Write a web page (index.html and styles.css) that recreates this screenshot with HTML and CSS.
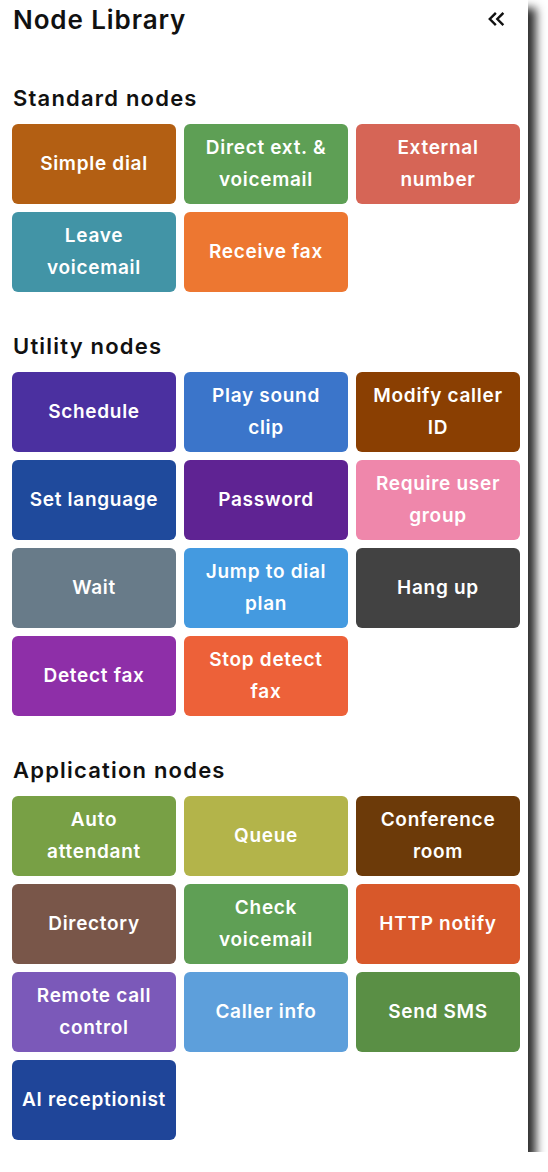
FILE: index.html
```html
<!DOCTYPE html>
<html lang="en">
<head>
<meta charset="utf-8">
<title>Node Library</title>
<link rel="stylesheet" href="styles.css">
</head>
<body>
<aside class="panel">
  <header class="panel-header">
    <h1 class="panel-title">Node Library</h1>
    <button class="collapse-btn" aria-label="Collapse">
      <svg width="18" height="14" viewBox="0 0 18 14" fill="none" stroke="#111" stroke-width="2.4" stroke-linecap="square" stroke-linejoin="miter">
        <path d="M8 1.8 L2.8 7 L8 12.2"/>
        <path d="M15.5 1.8 L10.3 7 L15.5 12.2"/>
      </svg>
    </button>
  </header>

  <section class="section">
    <h2 class="section-title">Standard nodes</h2>
    <div class="grid">
      <div class="node c-simple">Simple dial</div>
      <div class="node c-direct">Direct ext. &amp; voicemail</div>
      <div class="node c-external">External number</div>
      <div class="node c-leave">Leave voicemail</div>
      <div class="node c-fax">Receive fax</div>
    </div>
  </section>

  <section class="section">
    <h2 class="section-title">Utility nodes</h2>
    <div class="grid">
      <div class="node c-schedule">Schedule</div>
      <div class="node c-play">Play sound clip</div>
      <div class="node c-modify">Modify caller ID</div>
      <div class="node c-lang">Set language</div>
      <div class="node c-password">Password</div>
      <div class="node c-require">Require user group</div>
      <div class="node c-wait">Wait</div>
      <div class="node c-jump">Jump to dial plan</div>
      <div class="node c-hangup">Hang up</div>
      <div class="node c-detect">Detect fax</div>
      <div class="node c-stop">Stop detect fax</div>
    </div>
  </section>

  <section class="section">
    <h2 class="section-title">Application nodes</h2>
    <div class="grid">
      <div class="node c-auto">Auto attendant</div>
      <div class="node c-queue">Queue</div>
      <div class="node c-conf">Conference room</div>
      <div class="node c-dir">Directory</div>
      <div class="node c-check">Check voicemail</div>
      <div class="node c-http">HTTP notify</div>
      <div class="node c-remote">Remote call control</div>
      <div class="node c-caller">Caller info</div>
      <div class="node c-sms">Send SMS</div>
      <div class="node c-ai">AI receptionist</div>
    </div>
  </section>
</aside>
</body>
</html>
```

FILE: styles.css
```css
* { box-sizing: border-box; }

html, body {
  margin: 0;
  padding: 0;
  background: #ffffff;
}

body {
  font-family: Inter, "Noto Sans", "Liberation Sans", sans-serif;
  color: #111111;
}

.panel {
  display: flex;
  flex-direction: column;
  width: 528px;
  height: 1152px;
  background: #ffffff;
  padding: 0 8px 12px 12px;
  box-shadow: 8px 8px 9px rgba(0, 0, 0, 0.82);
}

.panel-header {
  display: flex;
  align-items: center;
  justify-content: space-between;
  height: 40px;
  flex: none;
  margin-bottom: 4px;
}

.panel-title {
  margin: 0;
  padding-left: 1px;
  font-size: 26px;
  font-weight: 560;
  line-height: 40px;
  letter-spacing: 0.9px;
  color: #111111;
}

.collapse-btn {
  width: 32px;
  height: 32px;
  margin-right: 8px;
  margin-top: -3px;
  padding: 0;
  border: 0;
  background: transparent;
  display: flex;
  align-items: center;
  justify-content: center;
}

.section {
  margin-top: 40px;
  flex: none;
}

.section-title {
  margin: 0 0 12px 0;
  padding-left: 1px;
  font-size: 22px;
  font-weight: 560;
  line-height: 28px;
  letter-spacing: 1.2px;
  color: #111111;
}

.grid {
  display: grid;
  grid-template-columns: repeat(3, 164px);
  grid-auto-rows: 80px;
  gap: 8px;
}

.node {
  display: flex;
  align-items: center;
  justify-content: center;
  text-align: center;
  padding: 0 10px;
  border-radius: 6px;
  color: #ffffff;
  font-size: 19px;
  font-weight: 560;
  line-height: 32px;
  letter-spacing: 0.7px;
}

.c-simple   { background: #b35f13; }
.c-direct   { background: #5e9f55; }
.c-external { background: #d66556; }
.c-leave    { background: #4294a6; }
.c-fax      { background: #ed7731; }

.c-schedule { background: #4b30a0; }
.c-play     { background: #3b75ca; }
.c-modify   { background: #8a3f02; }
.c-lang     { background: #1f4a9c; }
.c-password { background: #5f2393; }
.c-require  { background: #ef87ab; }
.c-wait     { background: #687b89; }
.c-jump     { background: #449ae0; }
.c-hangup   { background: #424242; }
.c-detect   { background: #8e2fa8; }
.c-stop     { background: #ed6139; }

.c-auto     { background: #78a045; }
.c-queue    { background: #b3b44a; }
.c-conf     { background: #6c3a09; }
.c-dir      { background: #795649; }
.c-check    { background: #5f9f55; }
.c-http     { background: #d8582a; }
.c-remote   { background: #7b59b9; }
.c-caller   { background: #5d9fdb; }
.c-sms      { background: #5a8f45; }
.c-ai       { background: #1f4599; }
```
